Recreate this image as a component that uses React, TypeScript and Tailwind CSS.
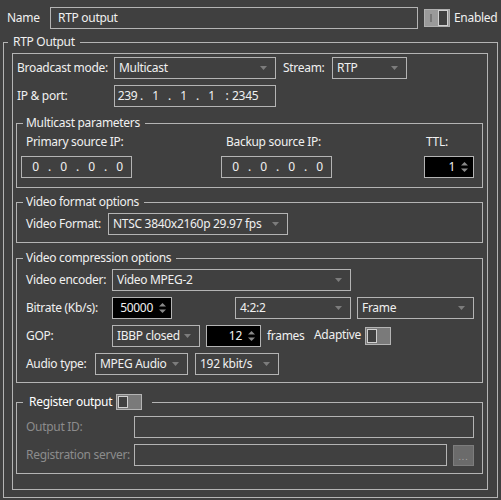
import React from 'react';

const Arrow = () => (
  <svg width="7" height="4" viewBox="0 0 7 4" className="shrink-0">
    <path d="M0 0 L7 0 L3.5 4 Z" fill="#7c7c7c" />
  </svg>
);

const Select = ({ value, w, className = '' }: { value: string; w: string; className?: string }) => (
  <div className={`${w} h-[22px] border border-[#b4b4b4] flex items-center justify-between pl-[4px] pr-[8px] shrink-0 ${className}`}>
    <span className="whitespace-nowrap">{value}</span>
    <Arrow />
  </div>
);

const Spin = ({ value, w, className = '' }: { value: string; w: string; className?: string }) => (
  <div className={`${w} h-[22px] bg-black border border-[#b4b4b4] flex items-center justify-end pr-[5px] gap-[6px] shrink-0 ${className}`}>
    <span>{value}</span>
    <svg width="7" height="12" viewBox="0 0 7 12">
      <path d="M0 4.5 L3.5 1 L7 4.5 Z" fill="#8a8a8a" />
      <path d="M0 7.5 L3.5 11 L7 7.5 Z" fill="#8a8a8a" />
    </svg>
  </div>
);

const Toggle = ({ on, h = 'h-[18px]' }: { on?: boolean; h?: string }) =>
  on ? (
    <div className={`w-[26px] ${h} border border-[#b0b0b0] bg-[#9a9a9a] flex items-center justify-between pl-[5px] pr-[1px] shrink-0`}>
      <div className="w-[2px] h-[8px] bg-[#777]" />
      <div className="w-[10px] h-full border border-[#d0d0d0] bg-[#404040]" />
    </div>
  ) : (
    <div className={`w-[26px] ${h} border border-[#b4b4b4] bg-[#7a7a7a] flex items-stretch p-[1px] shrink-0`}>
      <div className="w-[10px] border border-[#d0d0d0] bg-[#404040]" />
    </div>
  );

const Ip = ({ parts, port, w, pl }: { parts: string[]; port?: string; w: string; pl: string }) => (
  <div className={`${w} h-[22px] border border-[#b4b4b4] flex items-center ${pl} shrink-0`}>
    {parts.map((p, i) => (
      <React.Fragment key={i}>
        {i > 0 && <span className="w-[7px] text-center">.</span>}
        <span className="w-[21px] text-center">{p}</span>
      </React.Fragment>
    ))}
    {port && (
      <>
        <span className="w-[10px] text-center">:</span>
        <span>{port}</span>
      </>
    )}
  </div>
);

const Group = ({ legend, children, className = '' }: { legend: React.ReactNode; children: React.ReactNode; className?: string }) => (
  <fieldset className={`ml-[3px] w-[467px] border border-[#b4b4b4] ${className}`}>
    <legend className="ml-[6px] pl-[3px] pr-[5px] leading-[16px]">{legend}</legend>
    {children}
  </fieldset>
);

export default function App() {
  return (
    <div className="w-[501px] h-[500px] bg-[#404040] text-[#f0f0f0] text-[12px] leading-[16px] tracking-[-0.3px] whitespace-nowrap font-['Noto_Sans',sans-serif] pt-[7px] overflow-hidden">
      <div className="flex items-center h-[22px]">
        <span className="ml-[7px] w-[43px]">Name</span>
        <div className="w-[368px] h-[22px] border border-[#b4b4b4] flex items-center pl-[7px]">RTP output</div>
        <div className="ml-[6px]">
          <Toggle on />
        </div>
        <span className="ml-[4px]">Enabled</span>
      </div>

      <fieldset className="mt-[5px] ml-[3px] w-[495px] border border-[#b4b4b4]">
        <legend className="ml-[4px] px-[5px] leading-[16px]">RTP Output</legend>
        <div className="ml-[8px] mt-[3px] mb-[7px] w-[476px] border border-[#b4b4b4] pt-[3px] pb-[15px]">
          <div className="flex items-center ml-[4px]">
            <span className="w-[97px]">Broadcast mode:</span>
            <Select value="Multicast" w="w-[162px]" />
            <span className="ml-[7px] w-[49px]">Stream:</span>
            <Select value="RTP" w="w-[75px]" />
          </div>
          <div className="flex items-center ml-[4px] mt-[6px]">
            <span className="w-[97px]">IP &amp; port:</span>
            <Ip parts={['239', '1', '1', '1']} port="2345" w="w-[162px]" pl="pl-[2px]" />
          </div>

          <Group legend="Multicast parameters" className="mt-[8px] pb-[9px]">
            <div className="flex mt-[3px] ml-[4px]">
              <div className="w-[200px]">
                <div className="pl-[5px]">Primary source IP:</div>
                <div className="mt-[6px]">
                  <Ip parts={['0', '0', '0', '0']} w="w-[111px]" pl="pl-[3px]" />
                </div>
              </div>
              <div className="w-[203px]">
                <div className="pl-[5px]">Backup source IP:</div>
                <div className="mt-[6px]">
                  <Ip parts={['0', '0', '0', '0']} w="w-[111px]" pl="pl-[3px]" />
                </div>
              </div>
              <div>
                <div className="pl-[2px]">TTL:</div>
                <Spin value="1" w="w-[50px]" className="mt-[6px]" />
              </div>
            </div>
          </Group>

          <Group legend="Video format options" className="mt-[6px] pb-[7px]">
            <div className="flex items-center ml-[9px] mt-[3px]">
              <span className="w-[82px]">Video Format:</span>
              <Select value="NTSC 3840x2160p 29.97 fps" w="w-[180px]" />
            </div>
          </Group>

          <Group legend="Video compression options" className="mt-[7px] pb-[7px]">
            <div className="flex items-center ml-[9px] mt-[3px]">
              <span className="w-[86px]">Video encoder:</span>
              <Select value="Video MPEG-2" w="w-[239px]" />
            </div>
            <div className="flex items-center ml-[9px] mt-[6px]">
              <span className="w-[86px]">Bitrate (Kb/s):</span>
              <Spin value="50000" w="w-[60px]" />
              <Select value="4:2:2" w="w-[116px]" className="ml-[63px]" />
              <Select value="Frame" w="w-[117px]" className="ml-[6px]" />
            </div>
            <div className="flex items-center ml-[9px] mt-[6px]">
              <span className="w-[86px]">GOP:</span>
              <Select value="IBBP closed" w="w-[88px]" />
              <Spin value="12" w="w-[55px]" className="ml-[6px]" />
              <span className="ml-[6px] w-[47px]">frames</span>
              <span className="w-[51px] -mt-[3px]">Adaptive</span>
              <Toggle />
            </div>
            <div className="flex items-center ml-[9px] mt-[6px]">
              <span className="w-[69px]">Audio type:</span>
              <Select value="MPEG Audio" w="w-[93px]" />
              <Select value="192 kbit/s" w="w-[84px]" className="ml-[7px]" />
            </div>
          </Group>

          <fieldset className="mt-[11px] ml-[3px] w-[467px] border border-[#b4b4b4] pb-[7px]">
            <legend className="ml-[6px] pl-[6px] pr-[10px] leading-[16px]">
              <span className="flex items-center text-white">
                Register output
                <span className="ml-[4px]">
                  <Toggle h="h-[16px]" />
                </span>
              </span>
            </legend>
            <div className="flex items-center ml-[9px] mt-[6px] text-[#8c8c8c]">
              <span className="w-[108px]">Output ID:</span>
              <div className="w-[340px] h-[22px] border border-[#b4b4b4]" />
            </div>
            <div className="flex items-center ml-[9px] mt-[6px] text-[#8c8c8c]">
              <span className="w-[108px]">Registration server:</span>
              <div className="w-[313px] h-[22px] border border-[#b4b4b4]" />
              <div className="ml-[6px] w-[21px] h-[21px] bg-[#6b6b6b] border border-[#7d7d7d] flex items-end justify-center pb-[5px] text-[#a8a8a8] text-[9px] leading-[6px] tracking-[1px]">
                ...
              </div>
            </div>
          </fieldset>
        </div>
      </fieldset>
    </div>
  );
}
